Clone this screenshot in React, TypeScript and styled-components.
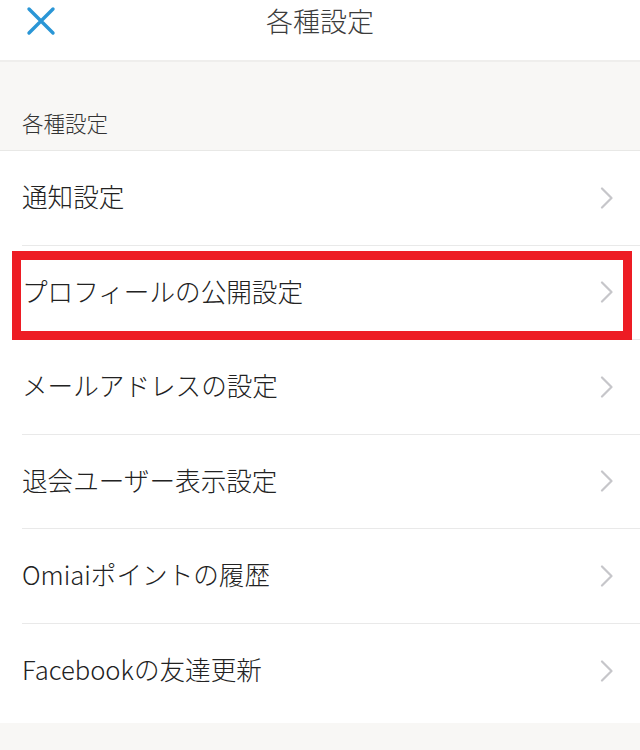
import { createGlobalStyle, styled } from "styled-components";

const GlobalStyle = createGlobalStyle`
  html, body {
    margin: 0;
    padding: 0;
    background: #f8f7f5;
  }
  body {
    font-family: "Noto Sans CJK JP", "Liberation Sans", sans-serif;
    color: #222222;
  }
`;

const Page = styled.div`
  width: 640px;
  min-height: 750px;
  background: #f8f7f5;
`;

const Header = styled.header`
  position: relative;
  height: 60px;
  background: #ffffff;
  border-bottom: 2px solid #efeeec;
  display: flex;
  align-items: center;
  justify-content: center;
`;

const CloseButton = styled.button`
  position: absolute;
  left: 24px;
  top: 4px;
  width: 34px;
  height: 34px;
  padding: 0;
  border: none;
  background: transparent;
  display: flex;
  align-items: center;
  justify-content: center;
`;

const Title = styled.h1`
  margin: 0 0 19px;
  font-size: 27px;
  font-weight: 300;
  color: #3c3c3c;
  line-height: 1;
`;

const SectionHeader = styled.div`
  height: 89px;
  box-sizing: border-box;
  padding: 0 0 17px 22px;
  display: flex;
  align-items: flex-end;
  font-size: 21.5px;
  font-weight: 300;
  line-height: 1;
  color: #333333;
  border-bottom: 1px solid #e8e8e6;
`;

const List = styled.ul`
  list-style: none;
  margin: 0;
  padding: 0 0 5px;
  background: #ffffff;
`;

const Row = styled.li<{ $highlight?: boolean; $last?: boolean }>`
  position: relative;
  height: 94.5px;
  box-sizing: border-box;
  margin-left: 22px;
  padding-right: 26px;
  display: flex;
  align-items: center;
  justify-content: space-between;
  border-bottom: ${(p) => (p.$last ? "none" : "1px solid #e9e9e9")};
  font-size: 25.6px;
  font-weight: 300;
  line-height: 1;
  color: #222222;

  ${(p) =>
    p.$highlight &&
    `
    &::after {
      content: "";
      position: absolute;
      left: -10px;
      right: 8px;
      top: 5px;
      bottom: -1px;
      border: 9px solid #ed1c24;
      pointer-events: none;
    }
  `}
`;

const Label = styled.span`
  padding-bottom: 3px;
`;

const Chevron = () => (
  <svg width="14" height="22" viewBox="0 0 14 22">
    <path
      d="M2 1.5 L11.5 11 L2 20.5"
      fill="none"
      stroke="#c6c6ca"
      strokeWidth="2.2"
      strokeLinecap="round"
      strokeLinejoin="round"
    />
  </svg>
);

const CloseIcon = () => (
  <svg width="32" height="32" viewBox="0 0 32 32">
    <path
      d="M4 4 L28 28 M28 4 L4 28"
      stroke="#2a96d6"
      strokeWidth="3.4"
      strokeLinecap="round"
    />
  </svg>
);

const items = [
  "通知設定",
  "プロフィールの公開設定",
  "メールアドレスの設定",
  "退会ユーザー表示設定",
  "Omiaiポイントの履歴",
  "Facebookの友達更新",
];

const App = () => {
  return (
    <Page>
      <GlobalStyle />
      <Header>
        <CloseButton aria-label="閉じる">
          <CloseIcon />
        </CloseButton>
        <Title>各種設定</Title>
      </Header>
      <SectionHeader>各種設定</SectionHeader>
      <List>
        {items.map((item, i) => (
          <Row key={item} $highlight={i === 1} $last={i === items.length - 1}>
            <Label>{item}</Label>
            <Chevron />
          </Row>
        ))}
      </List>
    </Page>
  );
};

export default App;
